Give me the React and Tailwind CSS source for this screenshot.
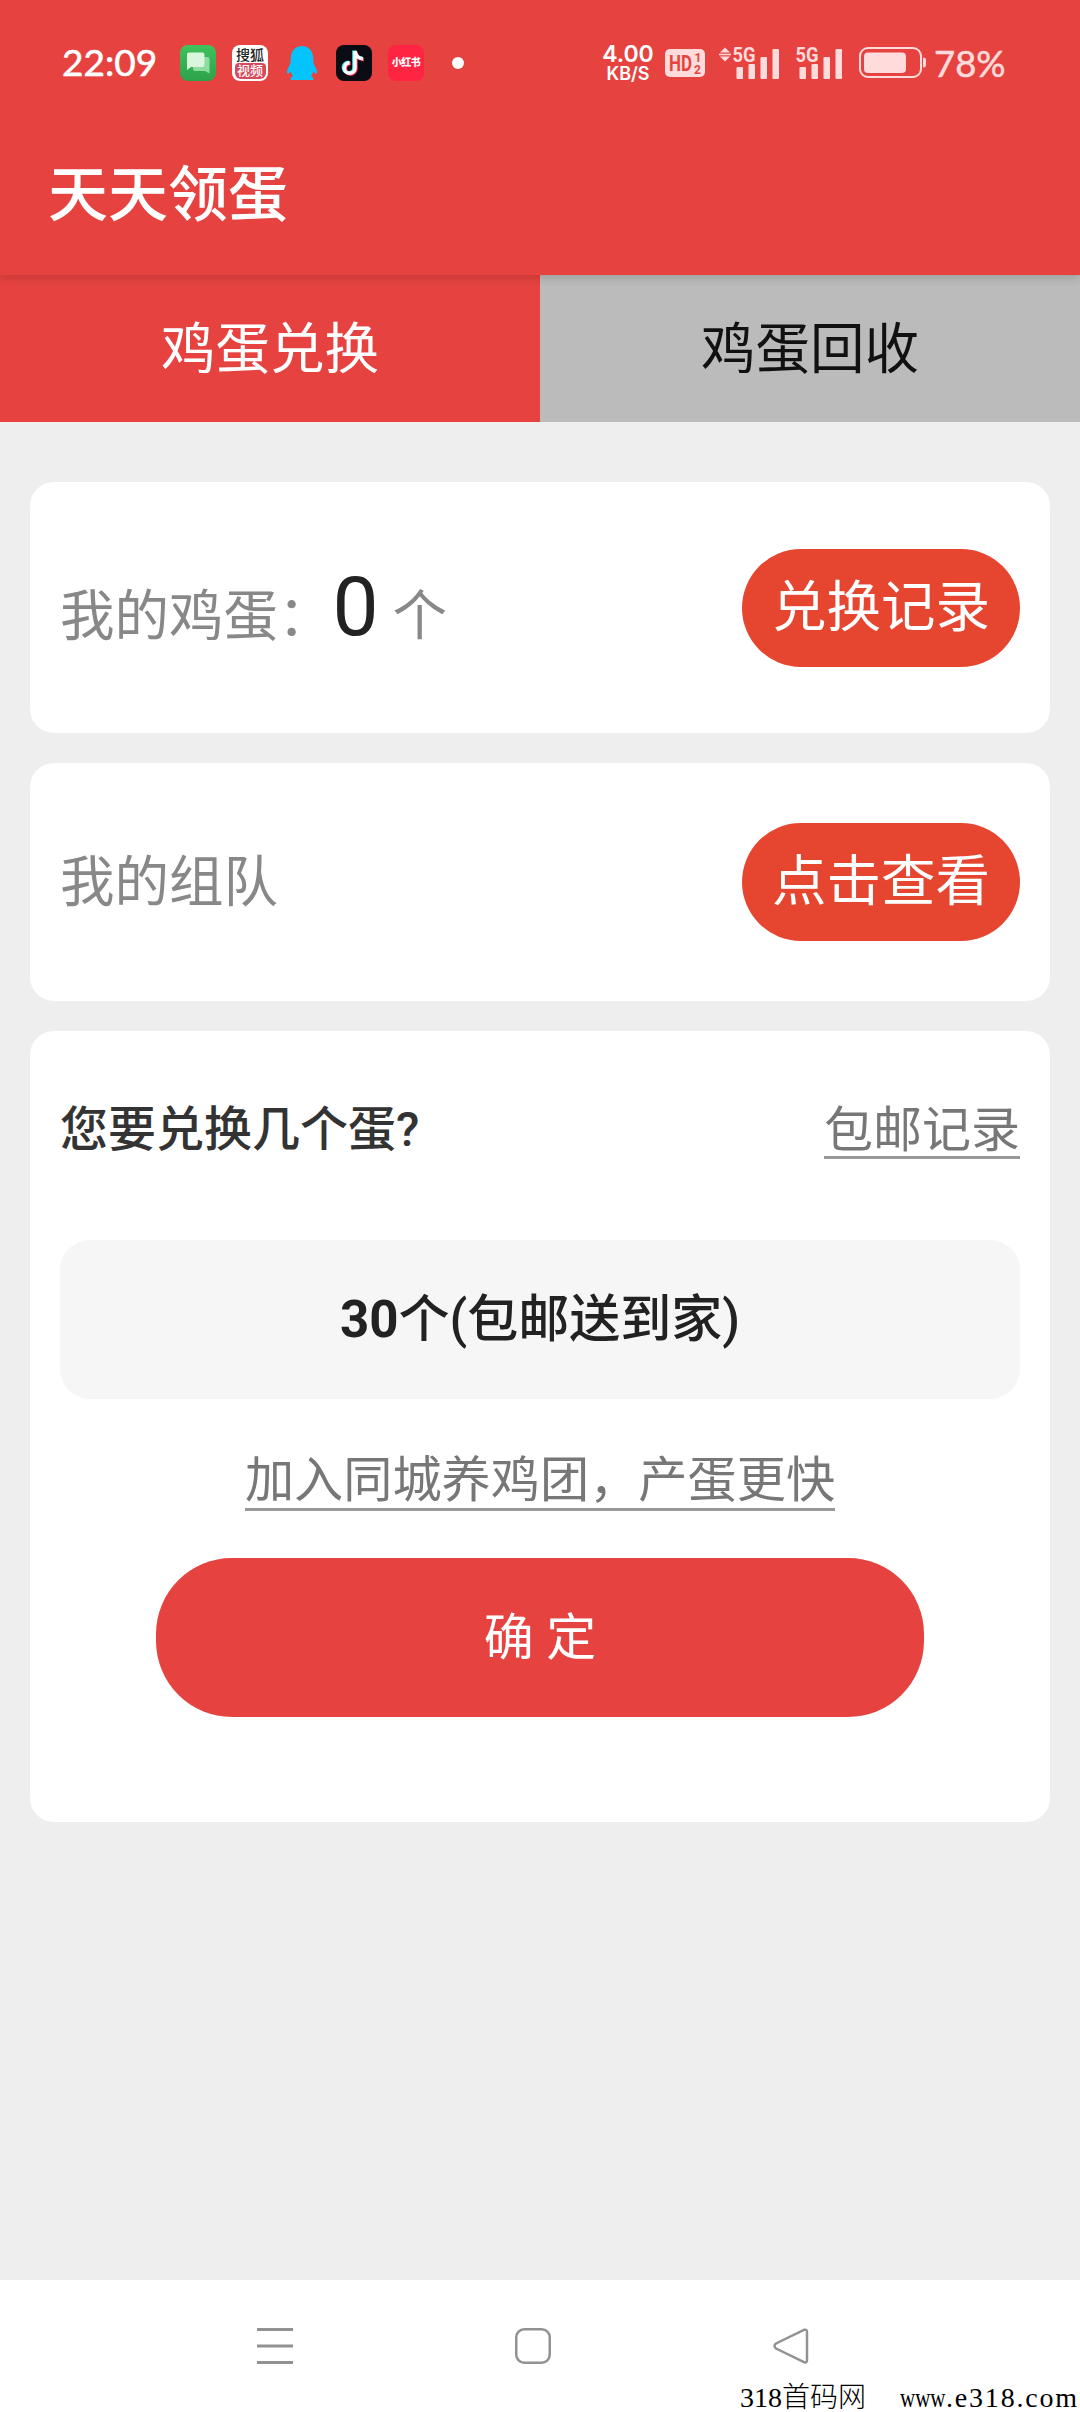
import { useState } from 'react';
import { clsx } from 'clsx';

const TABS = ['鸡蛋兑换', '鸡蛋回收'];

function MessageIcon() {
  return (
    <svg width="36" height="36" viewBox="0 0 36 36">
      <defs>
        <linearGradient id="msg" x1="0" y1="0" x2="0" y2="1">
          <stop offset="0" stopColor="#3fc25c" />
          <stop offset="1" stopColor="#2ea14b" />
        </linearGradient>
      </defs>
      <rect width="36" height="36" rx="8" fill="url(#msg)" />
      <path d="M15 12h12.500a2 2 0 0 1 2 2v14.500L25 26H15a2 2 0 0 1-2-2V14a2 2 0 0 1 2-2z" fill="#8fdca0" />
      <path d="M9 7.500h13.500a2 2 0 0 1 2 2V20a2 2 0 0 1-2 2H11l-4 3V9.500a2 2 0 0 1 2-2z" fill="#d9f5de" />
    </svg>
  );
}

function SohuIcon() {
  return (
    <div className="flex h-9 w-9 flex-col items-center rounded-lg bg-white pt-[2px] text-[14px] leading-[16px]">
      <span className="h-4 font-medium text-[#222]">搜狐</span>
      <span className="h-4 w-[31px] rounded-b-md rounded-t-sm bg-[#d9485b] text-center text-[13px] font-medium text-white">视频</span>
    </div>
  );
}

function QQIcon() {
  return (
    <svg width="32" height="36" viewBox="0 0 32 36" fill="#05c3fd">
      <path d="M16 1C9.500 1 5 6 4.800 12.500L4.500 18C3.500 21 1 24 1 27c0 2.500 1.500 2 3.700-.5.5 1.800 1.200 3.200 2.300 4.500-1.800.8-2.700 2-2.400 4h22.800c.3-2-.6-3.200-2.400-4 1.100-1.300 1.800-2.700 2.300-4.500C29.500 29 31 29.500 31 27c0-3-2.500-6-3.500-9l-.3-5.500C27 6 22.500 1 16 1z" />
    </svg>
  );
}

function DouyinIcon() {
  const note = 'M19 6v17a5.300 5.300 0 1 1-5.300-5.300M19 6c.4 4.500 3.500 7.500 8 7.800';
  return (
    <svg width="36" height="36" viewBox="0 0 36 36" fill="none" strokeWidth="3.600">
      <rect width="36" height="36" rx="8" fill="#0b0b14" />
      <path d={note} stroke="#25f4ee" transform="translate(-1 -.5)" />
      <path d={note} stroke="#fe2c55" transform="translate(1 .8)" />
      <path d={note} stroke="#fff" />
    </svg>
  );
}

function Signal({ arrows }) {
  return (
    <svg className="overflow-visible" width="62" height="34" viewBox="0 0 62 34" fill="#ffdcdb">
      {arrows && <path d="M7 1.500l5 5H2zM2 10.500h10l-5 5zM1 7.800h12v1.400H1z" />}
      <text x="14.500" y="15.500" fontSize="20" fontWeight="700" textLength="23" lengthAdjust="spacingAndGlyphs">5G</text>
      <rect x="18.500" y="21" width="6.500" height="12" rx="1" />
      <rect x="30.500" y="18" width="6.500" height="15" rx="1" />
      <rect x="42.500" y="11" width="6.500" height="22" rx="1" />
      <rect x="54.500" y="3" width="6.500" height="30" rx="1" />
    </svg>
  );
}

function Battery() {
  return (
    <svg width="68" height="32" viewBox="0 0 68 32" fill="#ffdcdb">
      <rect x="1" y="1" width="61" height="29" rx="8" fill="none" stroke="#ffdcdb" strokeWidth="2" />
      <rect x="5" y="5.500" width="42" height="20.500" rx="4" />
      <path d="M64 10.500c2.500 0 3 1 3 2.500v5c0 1.500-.5 2.500-3 2.500z" />
    </svg>
  );
}

function StatusBar() {
  return (
    <div className="flex h-[124px] items-start justify-between pl-[62px] pr-[75px] pt-[44px] text-white">
      <div className="flex h-[37px] items-center">
        <span className="w-[118px] pb-0.5 font-['Lato'] text-[37px] leading-[35px] [-webkit-text-stroke:0.6px_white]">22:09</span>
        <MessageIcon />
        <span className="ml-4"><SohuIcon /></span>
        <span className="ml-[18px]"><QQIcon /></span>
        <span className="ml-[18px]"><DouyinIcon /></span>
        <span className="ml-4 flex h-9 w-9 items-center justify-center whitespace-nowrap rounded-lg bg-[#ff2442] text-[10px] font-black tracking-[-0.5px]">小红书</span>
        <span className="ml-7 h-3 w-3 rounded-full bg-white" />
      </div>
      <div className="flex h-[37px] items-center text-[#ffdcdb]">
        <div className="flex w-[54px] flex-col items-center pt-0.5 font-['Inter'] font-semibold text-white">
          <span className="text-[23px] leading-[19px]">4.00</span>
          <span className="text-[18px] leading-[19px]">KB/S</span>
        </div>
        <svg className="ml-[10px]" width="40" height="28" viewBox="0 0 40 28">
          <rect width="40" height="28" rx="5" fill="#ffdcdb" />
          <g fill="#e64340" fontWeight="700">
            <text x="4" y="22" fontSize="22" textLength="23" lengthAdjust="spacingAndGlyphs">HD</text>
            <text x="29.500" y="13" fontSize="12">1</text>
            <text x="29" y="25" fontSize="12">2</text>
          </g>
        </svg>
        <span className="ml-[13px]"><Signal arrows /></span>
        <span className="ml-px"><Signal /></span>
        <span className="ml-[16px]"><Battery /></span>
        <span className="ml-[7px] w-[71px] pt-px font-['Lato'] text-[36.500px] leading-[36px] [-webkit-text-stroke:0.5px_#ffdcdb]">78%</span>
      </div>
    </div>
  );
}

function Card({ className, children }) {
  return <section className={clsx('rounded-3xl bg-white px-[30px]', className)}>{children}</section>;
}

function Pill({ children }) {
  return (
    <button className="h-[118px] rounded-full bg-[#e6452f] px-[30px] pb-0.5 text-[54.500px] leading-[60px] text-white">
      {children}
    </button>
  );
}

function NavBar() {
  return (
    <footer className="relative flex h-[132px] items-start bg-white pl-[257px] pt-12">
      <svg width="36" height="36" viewBox="0 0 36 36" fill="#929292">
        <path d="M0 0h36v3H0zM0 16.500h36v3H0zM0 33h36v3H0z" />
      </svg>
      <svg className="ml-[222px]" width="36" height="36" viewBox="0 0 36 36" fill="none" stroke="#929292" strokeWidth="2.500">
        <rect x="1.250" y="1.250" width="33.500" height="33.500" rx="8" />
      </svg>
      <svg className="ml-[222px]" width="36" height="36" viewBox="0 0 36 36" fill="none" stroke="#929292" strokeWidth="2.500" strokeLinejoin="round">
        <path d="M31 1.800 3 15.500q-3 2.500 0 5L31 34.200q3 .8 3-2V4q0-3-3-2.200z" />
      </svg>
      <p className="absolute bottom-0 right-0 flex h-[29px] w-[340px] whitespace-nowrap font-['Liberation_Serif','Noto_Sans_CJK_SC',serif] text-[28px] font-light leading-[29px] text-black">
        <span className="w-[160px]">318首码网</span>
        <span className="w-[46px] origin-left scale-x-75">www</span>
        <span className="tracking-[1.800px]">.e318.com</span>
      </p>
    </footer>
  );
}

export default function App() {
  const [tab, setTab] = useState(0);

  return (
    <div className="flex h-[2412px] w-[1080px] flex-col overflow-hidden bg-[#eeeeee] font-['Roboto','Noto_Sans_CJK_SC',sans-serif]">
      <header className="relative z-10 h-[275px] bg-[#e64340] shadow-[0_2px_10px_rgba(0,0,0,0.18)]">
        <StatusBar />
        <h1 className="pl-12 pt-[36px] text-[60px] font-medium leading-[72px] text-white">天天领蛋</h1>
      </header>

      <nav className="flex h-[147px]">
        {TABS.map((name, i) => (
          <button
            key={name}
            onClick={() => setTab(i)}
            className={clsx('flex-1 text-[54.500px] leading-[64px]', tab === i ? 'bg-[#e64340] text-white' : 'bg-[#bbbbbb] text-[#111]')}
          >
            {name}
          </button>
        ))}
      </nav>

      <main className="flex flex-1 flex-col gap-[30px] px-[30px] pt-[60px]">
        <Card className="flex h-[251px] items-center justify-between">
          <p className="flex items-baseline pt-2 text-[54.500px] leading-[96px] text-[#888]">
            我的鸡蛋：
            <span className="text-[82px] text-[#222]">0</span>
            <span className="ml-[14px]">个</span>
          </p>
          <Pill>兑换记录</Pill>
        </Card>

        <Card className="flex h-[238px] items-center justify-between">
          <p className="text-[54.500px] leading-[64px] text-[#888]">我的组队</p>
          <Pill>点击查看</Pill>
        </Card>

        <Card className="flex h-[791px] flex-col items-center pt-[68px]">
          <div className="flex h-[62px] w-full items-center justify-between">
            <h2 className="text-[48px] font-medium leading-[62px] text-[#333]">您要兑换几个蛋?</h2>
            <a className="h-[58px] border-b-[3px] border-[#999] text-[49px] leading-[59px] text-[#777]">包邮记录</a>
          </div>
          <div className="mt-[79px] flex h-[159px] w-full items-center justify-center rounded-[30px] bg-[#f6f6f6] pt-0.5 text-[51px] font-bold text-[#222]">
            <span>30</span>
            <span className="font-medium">个(包邮送到家)</span>
          </div>
          <a className="mt-[51px] h-[61px] border-b-[3px] border-[#999] text-[49.200px] leading-[61px] text-[#777]">加入同城养鸡团，产蛋更快</a>
          <button className="mt-[47px] h-[159px] w-[768px] rounded-[76px] bg-[#e64340] text-[50px] leading-[60px] text-white">
            确 定
          </button>
        </Card>
      </main>

      <NavBar />
    </div>
  );
}
